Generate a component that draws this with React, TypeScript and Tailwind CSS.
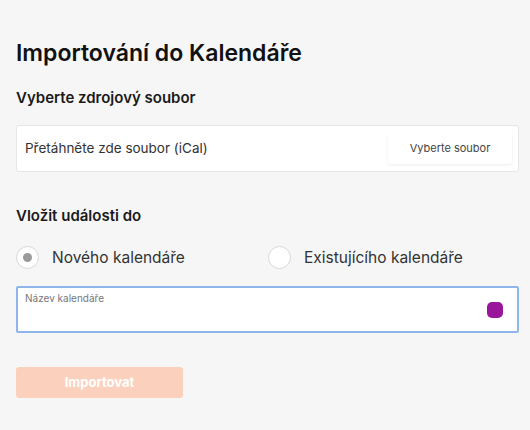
export default function App() {
  return (
    <div className="min-h-[430px] w-[530px] bg-[#f6f6f6] pl-4 pr-[11px] pt-[39px] font-['Inter','Noto_Sans',sans-serif] text-[#1a1a1a]">
      <h1 className="text-[23px] font-semibold leading-[29px] text-[#111]">
        Importování do Kalendáře
      </h1>

      <h2 className="mt-[20px] text-[15px] font-semibold leading-[20px] text-[#1a1a1a]">
        Vyberte zdrojový soubor
      </h2>

      <div className="mt-[17px] flex h-[47px] items-center justify-between rounded-[3px] border border-[#e6e6e6] bg-white pl-[8px] pr-[6px]">
        <span className="text-[13.5px] text-[#333]">Přetáhněte zde soubor (iCal)</span>
        <button className="h-[31px] w-[124px] rounded-[3px] bg-white text-[11px] text-[#444] shadow-[0_1px_3px_rgba(0,0,0,0.08)]">
          Vyberte soubor
        </button>
      </div>

      <h2 className="mt-[34px] text-[15px] font-semibold leading-[20px] text-[#1a1a1a]">
        Vložit události do
      </h2>

      <div className="mt-[20px] flex items-center">
        <label className="flex w-[252px] items-center gap-[13px]">
          <span className="flex h-[23px] w-[23px] items-center justify-center rounded-full border border-[#d8d8d8] bg-white">
            <span className="h-[9px] w-[9px] rounded-full bg-[#9a9a9a]" />
          </span>
          <span className="text-[15.5px] text-[#333]">Nového kalendáře</span>
        </label>
        <label className="flex items-center gap-[13px]">
          <span className="h-[23px] w-[23px] rounded-full border border-[#d8d8d8] bg-white" />
          <span className="text-[15.5px] text-[#333]">Existujícího kalendáře</span>
        </label>
      </div>

      <div className="mt-[17px] flex h-[47px] justify-between rounded-[2px] border-2 border-[#8fb6ea] bg-white pl-[7px] pr-[14px]">
        <span className="pt-[3px] text-[10px] text-[#777]">Název kalendáře</span>
        <span className="mt-[14px] h-[16px] w-[16px] rounded-[5px] bg-[#99159c]" />
      </div>

      <button className="mt-[34px] h-[31px] w-[167px] rounded-[3px] bg-[#fbd1bd] text-[13px] font-bold text-white">
        Importovat
      </button>
    </div>
  );
}
